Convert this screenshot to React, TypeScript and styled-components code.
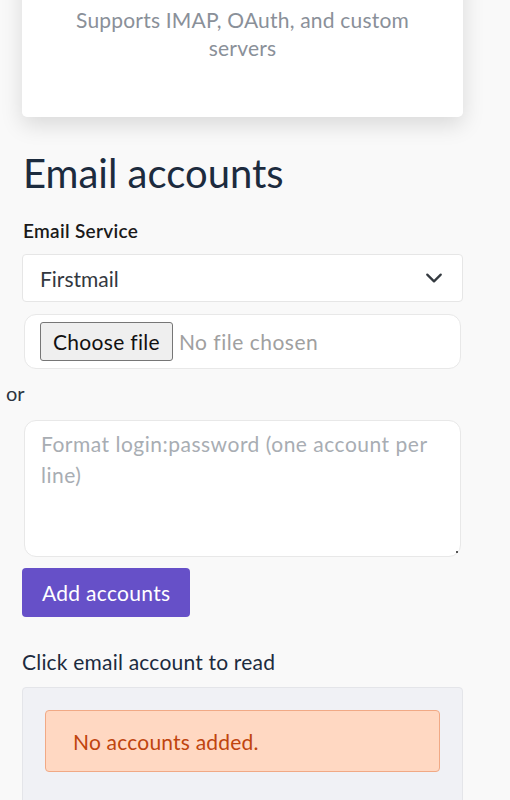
import React from "react";
import styled, { createGlobalStyle } from "styled-components";

const GlobalStyle = createGlobalStyle`
  html, body {
    margin: 0;
    padding: 0;
    background: #f9f9f9;
  }
  body {
    font-family: Lato, "Noto Sans", sans-serif;
    color: #1c2b3e;
  }
  * {
    box-sizing: border-box;
  }
`;

const Page = styled.div`
  width: 510px;
  padding: 0 47px 0 22px;
  display: flex;
  flex-direction: column;
`;

const InfoCard = styled.div`
  margin-top: -40px;
  padding: 46px 40px 55px;
  background: #ffffff;
  border-radius: 5px;
  box-shadow: 0 8px 22px rgba(0, 0, 0, 0.13);
  text-align: center;
`;

const InfoText = styled.p`
  margin: 0;
  font-size: 21px;
  line-height: 28px;
  letter-spacing: 0.2px;
  color: #8a9099;
`;

const Heading = styled.h1`
  margin: 33px 0 0 1px;
  font-size: 40px;
  font-weight: 400;
  line-height: 46px;
  color: #1c2b3e;
`;

const Label = styled.label`
  margin: 23px 0 0 1px;
  font-size: 19px;
  font-weight: 600;
  letter-spacing: 0.3px;
  color: #1a1a1a;
  line-height: 24px;
`;

const SelectBox = styled.div`
  margin-top: 11px;
  height: 48px;
  background: #ffffff;
  border: 1px solid #e6e6e6;
  border-radius: 4px;
  display: flex;
  align-items: center;
  justify-content: space-between;
  padding: 0 19px 0 17px;
  font-size: 21px;
  color: #333840;
`;

const Field = styled.div<{ $height: number }>`
  margin: 0 2px 0 2px;
  height: ${(p) => p.$height}px;
  background: #ffffff;
  border: 1px solid #e8e8e8;
  border-radius: 12px;
`;

const FileField = styled(Field)`
  margin-top: 12px;
  display: flex;
  align-items: center;
  padding-left: 15px;
  gap: 6px;
`;

const FileButton = styled.span`
  height: 39px;
  padding: 0 12px;
  display: flex;
  align-items: center;
  background: #efefef;
  border: 1px solid #767676;
  border-radius: 3px;
  font-size: 21px;
  letter-spacing: 0.3px;
  color: #111;
`;

const FileName = styled.span`
  font-size: 21px;
  letter-spacing: 0.5px;
  color: #a0a0a0;
`;

const OrText = styled.div`
  margin: 11px 0 0 -16px;
  font-size: 20px;
  line-height: 26px;
  color: #2c3440;
`;

const TextArea = styled(Field)`
  margin-top: 14px;
  padding: 7px 24px 8px 16px;
  position: relative;
`;

const Placeholder = styled.div`
  font-size: 21px;
  line-height: 31px;
  letter-spacing: 0.5px;
  color: #a8adb3;
`;

const ResizeDot = styled.span`
  position: absolute;
  right: 2px;
  bottom: 3px;
  width: 2px;
  height: 2px;
  background: #555;
`;

const PrimaryButton = styled.button`
  margin-top: 11px;
  align-self: flex-start;
  height: 49px;
  padding: 0 20px;
  background: #6650c8;
  border: none;
  border-radius: 4px;
  color: #ffffff;
  font-family: inherit;
  font-size: 21px;
  letter-spacing: 0.3px;
`;

const SubHeading = styled.div`
  margin-top: 32px;
  font-size: 21px;
  line-height: 26px;
  letter-spacing: 0.2px;
  color: #1c2b3e;
`;

const ListPanel = styled.div`
  margin-top: 12px;
  height: 130px;
  padding: 22px 22px;
  background: #f0f1f5;
  border: 1px solid #e4e5e9;
  border-radius: 4px;
`;

const Alert = styled.div`
  height: 62px;
  padding: 0 27px;
  display: flex;
  align-items: center;
  background: #ffd8c2;
  border: 1px solid #f1a985;
  border-radius: 4px;
  color: #c0440e;
  font-size: 21px;
  letter-spacing: 0.2px;
`;

export default function App() {
  return (
    <>
      <GlobalStyle />
      <Page>
        <InfoCard>
          <InfoText>Supports IMAP, OAuth, and custom servers</InfoText>
        </InfoCard>
        <Heading>Email accounts</Heading>
        <Label>Email Service</Label>
        <SelectBox>
          <span>Firstmail</span>
          <svg width="18" height="18" viewBox="0 0 16 16" fill="none">
            <path
              d="M2 5l6 6 6-6"
              stroke="#343a40"
              strokeWidth="2"
              strokeLinecap="round"
              strokeLinejoin="round"
            />
          </svg>
        </SelectBox>
        <FileField $height={55}>
          <FileButton>Choose file</FileButton>
          <FileName>No file chosen</FileName>
        </FileField>
        <OrText>or</OrText>
        <TextArea $height={137}>
          <Placeholder>Format login:password (one account per line)</Placeholder>
          <ResizeDot />
        </TextArea>
        <PrimaryButton>Add accounts</PrimaryButton>
        <SubHeading>Click email account to read</SubHeading>
        <ListPanel>
          <Alert>No accounts added.</Alert>
        </ListPanel>
      </Page>
    </>
  );
}
